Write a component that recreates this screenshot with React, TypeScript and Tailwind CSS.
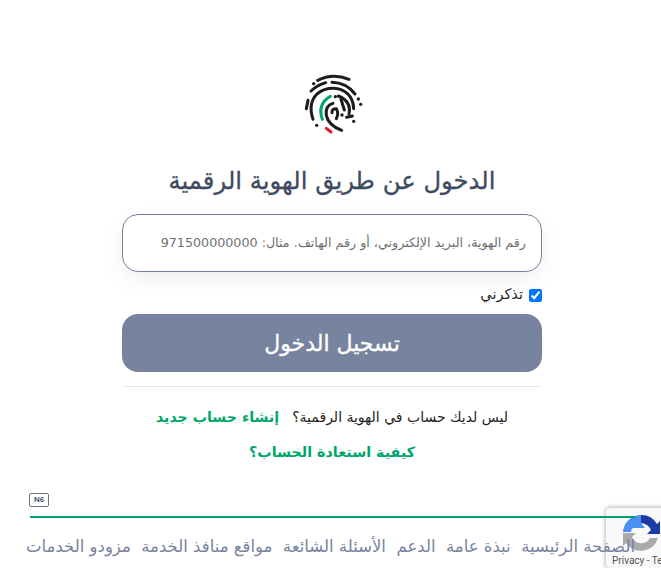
const navItems = [
  "الصفحة الرئيسية",
  "نبذة عامة",
  "الدعم",
  "الأسئلة الشائعة",
  "مواقع منافذ الخدمة",
  "مزودو الخدمات",
];

function FingerprintLogo() {
  return (
    <svg width="100" height="90" viewBox="0 0 300 270" fill="none" strokeLinecap="round" strokeWidth="9">
      <g stroke="#1d1d1f">
        <path d="M110 61Q155 38 204 58" />
        <path d="M90 93Q108 76 134 68" />
        <path d="M153 67Q196 68 222 102" />
        <path d="M81 121L76 146" />
        <path d="M96 178Q80 130 108 102Q138 78 178 88Q216 102 218 146" />
        <path d="M156 130Q132 136 136 166Q142 196 182 211" />
        <path d="M172 108Q212 124 204 162" />
        <path d="M180 118L190 150" />
        <path d="M153 158Q152 146 166 146Q174 160 166 176" />
        <path d="M197 172L214 168" />
      </g>
      <g fill="#1d1d1f">
        <circle cx="98" cy="71" r="5" />
        <circle cx="163" cy="110" r="5" />
        <circle cx="232" cy="117" r="5" />
        <circle cx="239" cy="133" r="5" />
        <circle cx="218" cy="184" r="5" />
        <circle cx="107" cy="196" r="5" />
        <circle cx="183" cy="165" r="5" />
      </g>
      <path d="M124 178Q108 132 148 109" stroke="#00a66a" />
      <path d="M136 205L150 216" stroke="#e31b23" />
    </svg>
  );
}

function RecaptchaBadge() {
  return (
    <div className="absolute left-[606px] top-[508px] h-[60px] w-[256px] rounded-sm bg-[#f9f9f9] shadow-[0_0_5px_rgba(128,128,128,0.8)]">
      <svg width="40" height="40" viewBox="0 0 40 40" className="absolute left-[15px] top-[5px]">
        <path d="M37 25A18 18 0 0 1 5 30L2 33V20H15L11 24A10 10 0 0 0 29 25Z" fill="#ababab" />
        <path d="M2 19A18 18 0 0 1 20 2V10L24 15H12Q10 16 10 19Z" fill="#4a90f2" />
        <path d="M20 2A18 18 0 0 1 36 11L39 8V21H26L30 17A12 12 0 0 0 20 10Z" fill="#1c3aa9" />
      </svg>
      <p className="absolute left-[6px] top-[47px] whitespace-nowrap font-['Roboto',sans-serif] text-[10px] leading-3 text-[#555]">
        Privacy - Terms
      </p>
    </div>
  );
}

export default function App() {
  return (
    <div dir="rtl" className="relative h-[568px] w-[661px] overflow-hidden bg-white font-['DejaVu_Sans',sans-serif]">
      <main className="mr-[119px] flex w-[420px] flex-col pt-[60px]">
        <div className="flex justify-center pr-[3px]">
          <FingerprintLogo />
        </div>
        <h1 className="mt-[16px] text-center text-[24.3px] font-medium leading-[30px] text-[#3e4a60] [-webkit-text-stroke:0.3px_#3e4a60]">
          الدخول عن طريق الهوية الرقمية
        </h1>
        <div className="mt-[18px] flex h-[58px] items-center rounded-2xl border border-[#76819e] bg-white px-[15px] text-[12.7px] text-[#6f6f6f] shadow-[0_8px_20px_rgba(60,70,100,0.08)]">
          رقم الهوية، البريد الإلكتروني، أو رقم الهاتف. مثال: 971500000000
        </div>
        <label className="mt-[15px] flex h-[16px] items-center gap-[6px] text-[14.5px] text-[#1f1f1f]">
          <input type="checkbox" defaultChecked className="m-0 h-[13px] w-[13px] accent-[#0075ff]" />
          تذكرني
        </label>
        <button className="mt-[11px] h-[58px] rounded-2xl bg-[#7883a0] text-[22px] font-medium text-white [-webkit-text-stroke:0.3px_#ffffff]">
          تسجيل الدخول
        </button>
        <hr className="mt-[14px] border-[#e5e7eb]" />
        <p className="mt-[20px] flex justify-center gap-[13px] text-[14px] leading-5 text-[#232323]">
          <span>ليس لديك حساب في الهوية الرقمية؟</span>
          <a className="text-[14.2px] font-bold text-[#00a66a]">إنشاء حساب جديد</a>
        </p>
        <a className="mt-[15px] text-center text-[14.3px] font-bold leading-5 text-[#00a66a]">كيفية استعادة الحساب؟</a>
      </main>
      <RecaptchaBadge />
      <footer className="relative z-10 mx-[26px] mt-[31px]">
        <div dir="ltr" className="pl-[3px]">
          <span className="flex h-[14px] w-[20px] items-center justify-center rounded-[2px] border border-[#6b7280] font-['Liberation_Sans',sans-serif] text-[8px] font-bold text-[#4b5563]">
            N6
          </span>
        </div>
        <div className="ml-[4px] mt-[9px] h-[2px] bg-[#00a070]" />
        <nav className="mt-[19px] flex justify-between whitespace-nowrap text-[16.5px] font-medium leading-5 text-[#7883a0]">
          {navItems.map((item) => (
            <a key={item}>{item}</a>
          ))}
        </nav>
      </footer>
    </div>
  );
}
